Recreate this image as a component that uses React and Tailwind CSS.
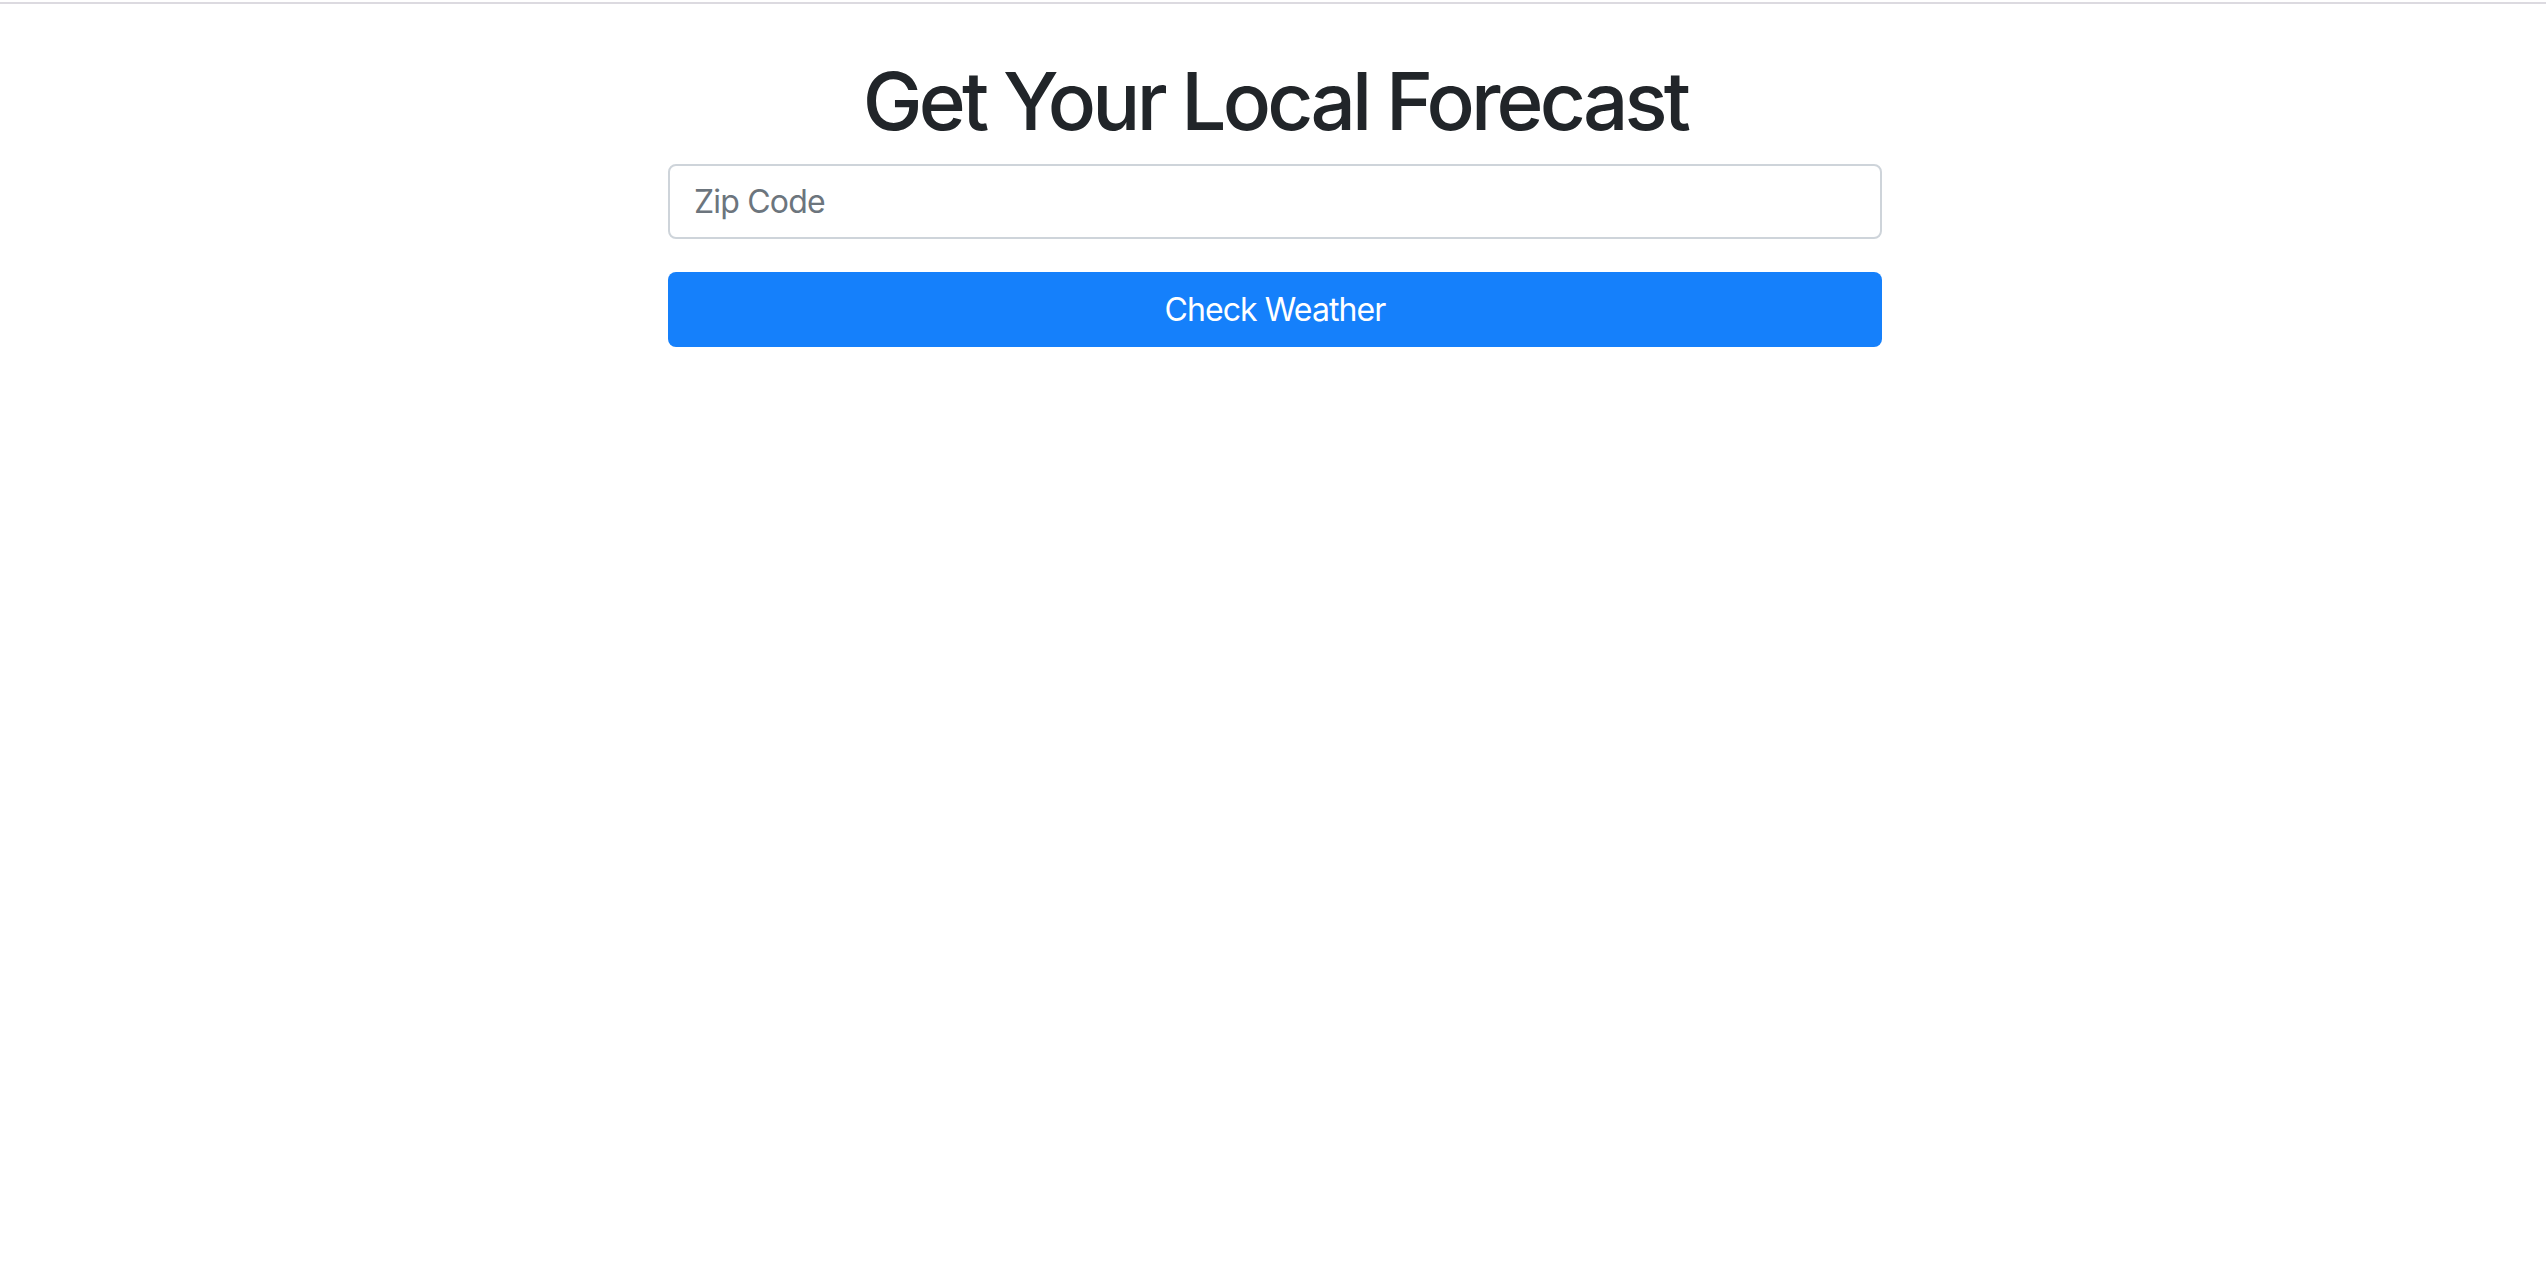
export default function App() {
  return (
    <div className="min-h-screen bg-white font-['Inter',sans-serif] text-[#212529]">
      {/* top divider */}
      <div className="h-[2px] mt-[2px] bg-[#dcdae0]"></div>

      <div className="w-[1214px] ml-[668px] pt-[49px]">
        <h1 className="text-center text-[80px] leading-[96px] font-medium tracking-[-3.8px] mb-[15px]">
          Get Your Local Forecast
        </h1>

        <form onSubmit={(e) => e.preventDefault()}>
          <div className="mb-[33px]">
            <input
              type="text"
              placeholder="Zip Code"
              className="block w-full h-[75px] px-[24px] text-[32px] tracking-[-0.8px] bg-white border-2 border-[#ced4da] rounded-[8px] outline-none placeholder:text-[#6c757d]"
            />
          </div>
          <button
            type="submit"
            className="block w-full h-[75px] bg-[#1580fb] text-white text-[32px] tracking-[-0.9px] rounded-[8px]"
          >
            Check Weather
          </button>
        </form>
      </div>
    </div>
  );
}
